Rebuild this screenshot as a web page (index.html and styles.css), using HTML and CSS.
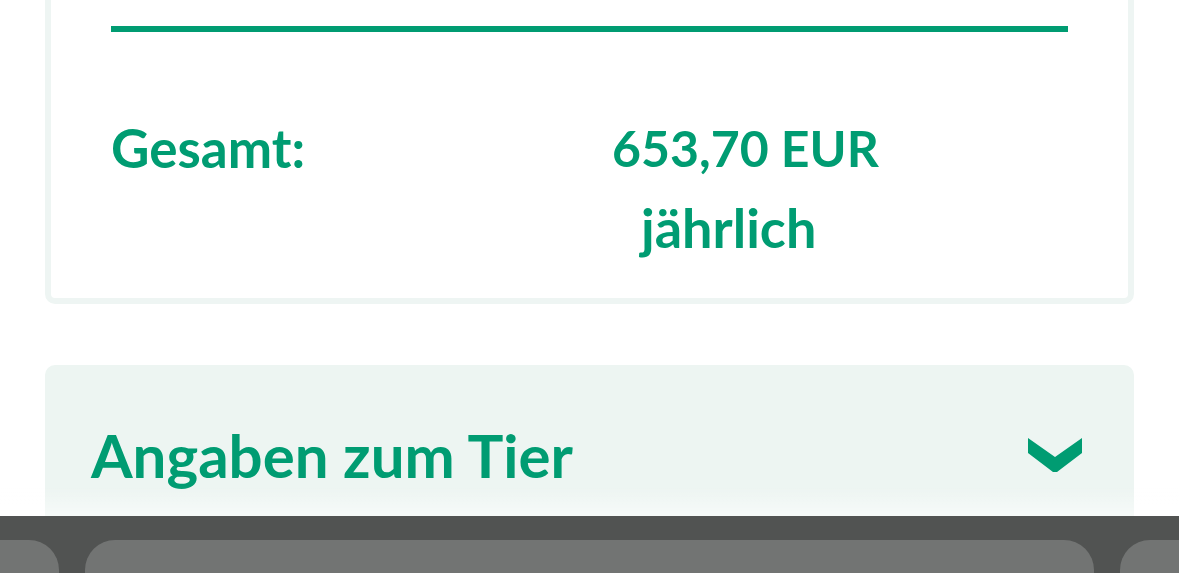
FILE: index.html
```html
<!DOCTYPE html>
<html lang="de">

<head>
    <meta charset="UTF-8">
    <meta name="viewport" content="width=device-width, initial-scale=1.0">
    <title>Tarif</title>
    <link rel="stylesheet" href="styles.css">
</head>

<body>
    <div class="summary">
        <div class="summary_rule"></div>
        <div class="summary_total">
            <p class="summary_label">Gesamt:</p>
            <p class="summary_value">
                <span class="summary_amount">653,70 EUR</span>
                <span class="summary_period">jährlich</span>
            </p>
        </div>
    </div>

    <div class="accordion">
        <h2 class="accordion_title">Angaben zum Tier</h2>
        <svg class="accordion_icon" viewBox="0 0 54 34" width="54" height="34" aria-hidden="true">
            <polygon points="0,0 27,19 54,0 54,15 29,34 25,34 0,15" fill="#009c72" />
        </svg>
    </div>

    <div id="tabs">
        <div class="tab tab_side"></div>
        <div class="tab tab_main"></div>
        <div class="tab tab_side"></div>
    </div>
</body>

</html>
```

FILE: styles.css
```css
* {
    margin: 0;
    padding: 0;
    border: none;
    box-sizing: border-box;
}

html,
body {
    width: 100%;
    background-color: white;
    font-family: Lato, "Noto Sans", sans-serif;
    color: #009c72;
    overflow: hidden;
}

.summary {
    margin: -20px 45px 0 45px;
    border: 6px solid #eef5f3;
    border-radius: 10px;
    padding: 40px 60px 0 60px;
    height: 324px;
}

.summary_rule {
    height: 6px;
    background-color: #009c72;
}

.summary_total {
    display: flex;
    margin-top: 76px;
    font-weight: bold;
    font-size: 50px;
    line-height: 80px;
}

.summary_label {
    width: 501px;
    font-size: 53px;
}

.summary_amount,
.summary_period {
    display: block;
}

.summary_period {
    padding-left: 29px;
    font-size: 54px;
}

.accordion {
    display: flex;
    align-items: center;
    justify-content: space-between;
    margin: 61px 45px 0 45px;
    padding: 0 52px 0 46px;
    height: 180px;
    border-radius: 10px;
    background-color: #edf5f2;
}

.accordion_title {
    font-size: 60px;
    font-weight: bold;
}

/* browser tab strip lying over the page */
#tabs {
    position: fixed;
    left: 0;
    bottom: 0;
    width: 100%;
    height: 57px;
    padding-top: 24px;
    display: flex;
    gap: 26px;
    background-color: #515352;
}

#tabs::before {
    content: "";
    position: absolute;
    left: 0;
    right: 0;
    bottom: 100%;
    height: 30px;
    background: linear-gradient(rgba(255, 255, 255, 0), rgba(255, 255, 255, 0.5));
}

.tab {
    background-color: #727473;
    border-radius: 30px 30px 0 0;
}

.tab_side {
    width: 120px;
    margin-left: -61px;
}

.tab_main {
    flex: 1;
}

.tab_main + .tab_side {
    margin-left: 0;
    margin-right: -61px;
}
```
